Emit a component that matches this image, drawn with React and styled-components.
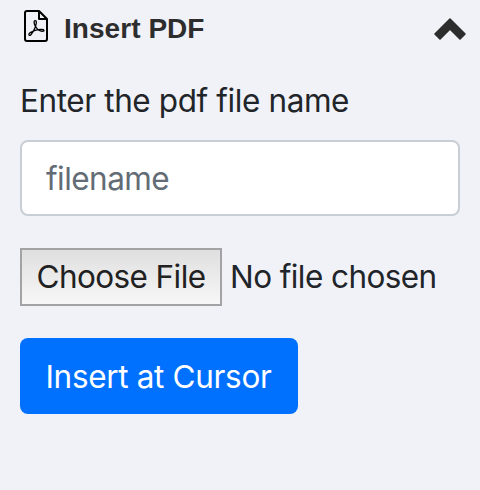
import React from 'react';
import styled, { createGlobalStyle } from 'styled-components';

const GlobalStyle = createGlobalStyle`
  *, *::before, *::after { box-sizing: border-box; }
  body {
    margin: 0;
    background: #f1f2f8;
    color: #212529;
    font-family: Inter, "Liberation Sans", sans-serif;
    font-size: 31.5px;
    line-height: 48px;
  }
`;

const Panel = styled.section`
  width: 480px;
  height: 490px;
  padding: 0 20px;
  overflow: hidden;
`;

const Header = styled.header`
  display: flex;
  align-items: center;
  height: 56px;
  margin-right: -7px;
`;

const PdfIcon = styled.svg`
  width: 26px;
  height: 34px;
  margin: 0 15px 4px 3px;
`;

const Title = styled.h2`
  flex: 1;
  margin: 0;
  padding-top: 1px;
  color: #2d2d2d;
  font: bold 28px/32px "Liberation Sans", Arial, sans-serif;
  letter-spacing: 0.05px;
`;

const Chevron = styled.svg`
  width: 34px;
  height: 24px;
  margin-top: 2px;
`;

const Label = styled.label`
  display: block;
  height: 48px;
  margin: 21px 0 15px;
  letter-spacing: -0.4px;
  white-space: nowrap;
`;

const TextInput = styled.input`
  display: block;
  width: 100%;
  height: 76px;
  padding: 12px 24px;
  border: 2px solid #c8ced5;
  border-radius: 8px;
  background: #fff;
  color: #495057;
  font: inherit;
  letter-spacing: -0.55px;
  outline: none;
  &::placeholder { color: #636c75; opacity: 1; }
`;

const FileRow = styled.div`
  display: flex;
  align-items: center;
  gap: 8px;
  height: 58px;
  margin: 32px 0;
  letter-spacing: -0.58px;
  white-space: nowrap;
`;

const FileButton = styled.button`
  width: 202px;
  height: 58px;
  padding: 0;
  border: 2px solid #a3a3a5;
  background: linear-gradient(#dfdfdf, #f7f7f7);
  color: #212121;
  font: inherit;
  letter-spacing: -0.6px;
`;

const PrimaryButton = styled.button`
  width: 278px;
  height: 76px;
  padding: 2px 1px 0 0;
  border: 0;
  border-radius: 8px;
  background: #0070ff;
  color: #fff;
  font: inherit;
  letter-spacing: -0.33px;
  white-space: nowrap;
`;

export default function App() {
  return (
    <Panel>
      <GlobalStyle />
      <Header>
        <PdfIcon viewBox="0 0 26 34" fill="none" stroke="#000" aria-hidden="true">
          <path d="M16 2H4Q2 2 2 4V30Q2 32 4 32H22Q24 32 24 30V10L16 2V10H24" strokeWidth="2" strokeLinejoin="round" />
          <path d="M12.2 11.6C10.3 11.6 11.2 15 12.5 17.8C11.2 21 9.5 24 7.7 26C6.2 27.2 4.8 25.4 6.8 23.9C10.2 21.7 14.4 20.6 18.6 20.4C21.6 20.4 21.7 22.3 19.5 22.4C16.5 22.3 13.8 19.9 12.5 17.3C13.4 14.8 13.9 11.6 12.2 11.6Z" strokeWidth="1.3" />
        </PdfIcon>
        <Title>Insert PDF</Title>
        <Chevron viewBox="0 0 34 24" aria-hidden="true">
          <path d="M2 17L17 2L32 17L27 22L17 12L7 22Z" fill="#2d2d2d" stroke="#2d2d2d" strokeWidth="1.6" strokeLinejoin="round" />
        </Chevron>
      </Header>
      <Label htmlFor="filename">Enter the pdf file name</Label>
      <TextInput id="filename" placeholder="filename" />
      <FileRow>
        <FileButton type="button">Choose File</FileButton>
        <span>No file chosen</span>
      </FileRow>
      <PrimaryButton type="button">Insert at Cursor</PrimaryButton>
    </Panel>
  );
}
